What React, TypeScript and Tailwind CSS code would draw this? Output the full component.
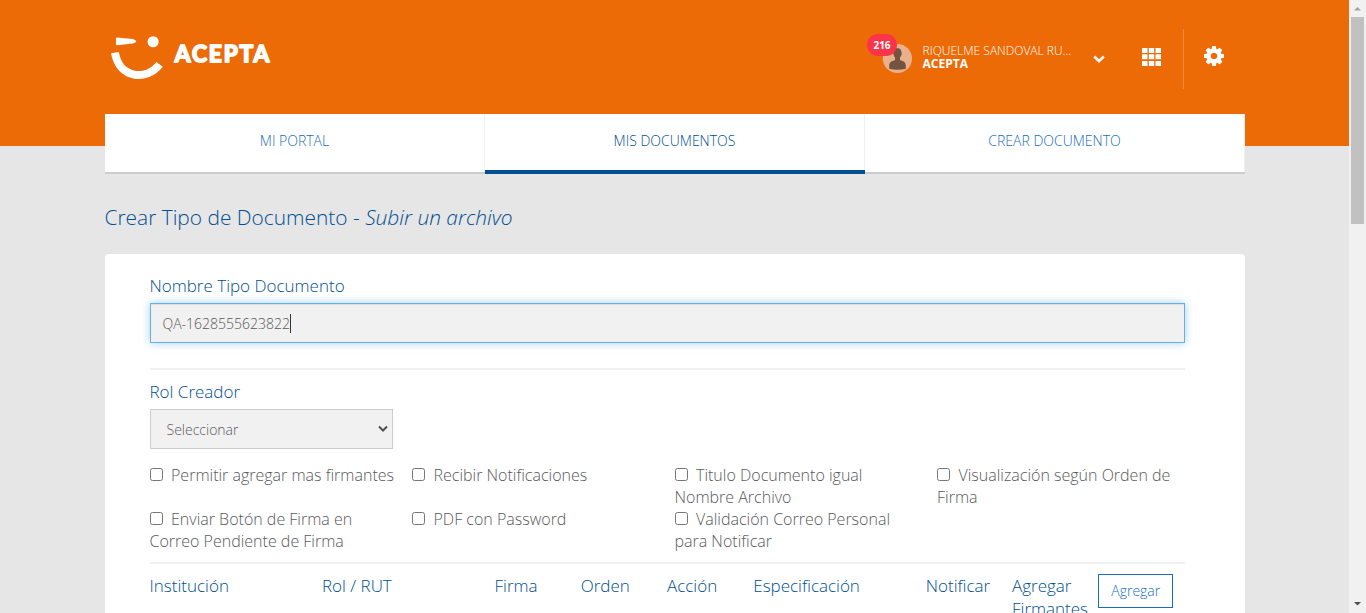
import React from "react";

const tabs = [
  { label: "MI PORTAL", active: false },
  { label: "MIS DOCUMENTOS", active: true },
  { label: "CREAR DOCUMENTO", active: false },
];

const options = [
  "Permitir agregar mas firmantes",
  "Recibir Notificaciones",
  "Titulo Documento igual Nombre Archivo",
  "Visualización según Orden de Firma",
  "Enviar Botón de Firma en Correo Pendiente de Firma",
  "PDF con Password",
  "Validación Correo Personal para Notificar",
];

function Logo() {
  return (
    <div className="flex h-[44px] w-[165px] items-start">
      <svg width="54" height="44" viewBox="0 0 54 44" fill="none">
        <path d="M6 1.300 L22 2.900 Q29 5.200 22 7.500 L6 9.100 Q5 9 5 8 V2.400 Q5 1.300 6 1.300 Z" fill="#fff" />
        <circle cx="42.400" cy="5.700" r="5.600" fill="#fff" />
        <path d="M4 16.700 C8 42.500 36 45.500 48.900 28.500" stroke="#fff" strokeWidth="8" strokeLinejoin="round" />
      </svg>
      <svg width="104" height="36" viewBox="0 0 104 36" className="ml-2">
        <text x="1.800" y="26.500" fill="#fff" stroke="#fff" strokeWidth="1.800" strokeLinejoin="round" fontFamily="Lato, sans-serif" fontWeight="700" fontSize="22.800" textLength="95" lengthAdjust="spacing">ACEPTA</text>
      </svg>
    </div>
  );
}

function User() {
  return (
    <div className="relative flex h-[60px] w-[224px] pt-[15px]">
      <svg width="30" height="30" viewBox="0 0 30 30" className="ml-[15px]">
        <circle cx="15.400" cy="14.500" r="14.600" fill="#e9b18b" />
        <ellipse cx="15.500" cy="9.300" rx="4.200" ry="5.300" fill="#745440" />
        <path d="M13 12h5v4.200c4 .8 5.500 2 5.800 5.200v3.400q-8.300 2-16.600 0v-3.400c.3-3.200 1.800-4.400 5.800-5.200z" fill="#745440" />
      </svg>
      <span className="absolute left-0 top-[5px] flex h-[22px] w-[30px] items-center justify-center rounded-full bg-[#fb3449] text-[10px] font-bold">216</span>
      <div className="ml-[10.5px] text-[12px] leading-[13px]">
        <div className="w-[152px] whitespace-nowrap">RIQUELME SANDOVAL RU...</div>
        <div className="font-bold">ACEPTA</div>
      </div>
    </div>
  );
}

function Scrollbar() {
  return (
    <div className="flex w-[17px] shrink-0 flex-col items-center justify-between bg-[#f1f1f1]">
      <div className="flex flex-col items-center">
        <svg width="17" height="17" viewBox="0 0 17 17"><path d="M5 10.500h7L8.500 7z" fill="#a3a3a3" /></svg>
        <div className="h-[207px] w-[13px] bg-[#c1c1c1]" />
      </div>
      <svg width="17" height="17" viewBox="0 0 17 17"><path d="M5 6h7L8.500 9.500z" fill="#505050" /></svg>
    </div>
  );
}

export default function App() {
  return (
    <div className="flex h-[613px] w-[1366px] overflow-hidden bg-[#e6e6e6] font-['Open_Sans',sans-serif] font-light text-[#58595b]">
      <div className="h-full min-w-0 flex-1 overflow-hidden">
        <header className="h-[146px] bg-[#ed6b06] pt-[29px] text-white">
          <div className="flex w-[1245px] pl-[111px]">
            <div className="pt-[7px]"><Logo /></div>
            <div className="ml-[591px]"><User /></div>
            <svg width="12" height="9" viewBox="0 0 12 9" className="mt-[26px] ml-[2px]" fill="none">
              <path d="M1.200 1.600 6 6.100l4.800-4.500" stroke="#f2f2f2" strokeWidth="2.800" />
            </svg>
            <svg width="19" height="18" viewBox="0 0 19 18" className="mt-[19px] ml-[37px]" fill="#fff">
              <path d="M0 0h5.500v5H0zM6.800 0h5.400v5H6.800zM13.500 0H19v5h-5.500zM0 6.300h5.500v5H0zM6.800 6.300h5.400v5H6.800zM13.500 6.300H19v5h-5.500zM0 13h5.500v5H0zM6.800 13h5.400v5H6.800zM13.500 13H19v5h-5.500z" />
            </svg>
            <div className="ml-[22px] h-[60px] w-px bg-[#f2883a]" />
            <svg width="20" height="20" viewBox="0 0 1536 1536" className="mt-[17px] ml-[19.5px]" fill="#fff">
              <path d="M1024 768q0-106-75-181t-181-75-181 75-75 181 75 181 181 75 181-75 75-181zm512-109v222q0 12-8 23t-20 13l-185 28q-19 54-39 91 35 50 107 138 10 12 10 25t-9 23q-27 37-99 108t-94 71q-12 0-26-9l-138-108q-44 23-91 38-16 136-29 186-7 28-36 28H657q-14 0-24.500-8.500T621 1506l-28-184q-49-16-90-37l-141 107q-10 9-25 9-14 0-25-11-126-114-165-168-7-10-7-23 0-12 8-23 15-21 51-66.500t54-70.500q-27-50-41-99L29 913q-13-2-21-12.500T0 877V655q0-12 8-23t19-13l186-28q14-46 39-92-40-57-107-138-10-12-10-24 0-10 9-23 26-36 98.500-107.500T337 135q13 0 26 10l138 107q44-23 91-38 16-136 29-186 7-28 36-28h222q14 0 24.500 8.500T915 30l28 184q49 16 90 37l142-107q9-9 24-9 13 0 25 10 129 119 165 170 7 8 7 22 0 12-8 23-15 21-51 66.500t-54 70.500q26 50 41 98l183 28q13 2 21 12.500t8 23.500z" />
            </svg>
          </div>
        </header>

        <main className="relative mx-auto -mt-8 w-[1140px]">
          <nav className="grid h-[60px] grid-cols-3 text-center text-[14px]">
            {tabs.map((tab) => (
              <a
                key={tab.label}
                className={
                  tab.active
                    ? "border-b-4 border-b-[#004f91] bg-white pt-[17px] leading-5 text-[#004f91] shadow-[inset_-1px_0_0_#f0f0f0]"
                    : "border-b-2 border-b-[#cccccc] bg-white pt-[17px] leading-5 text-[#1a6dbd] shadow-[inset_-1px_0_0_#f0f0f0]"
                }
              >
                {tab.label}
              </a>
            ))}
          </nav>

          <h1 className="mt-[28px] h-[52px] text-[20.9px] leading-[30px] text-[#004f91]">
            Crear Tipo de Documento - <em>Subir un archivo</em>
          </h1>

          <section className="h-[400px] rounded-t bg-white px-[45px] pt-[21px]">
            <label className="block h-[28px] text-[17px] leading-[22px] text-[#004f91]">Nombre Tipo Documento</label>
            <div className="flex h-[40px] w-[1035px] items-center border border-[#66afe9] bg-[#f1f1f1] pl-3 text-[14px] shadow-[inset_0_1px_1px_rgba(0,0,0,0.075),0_0_8px_rgba(102,175,233,0.6)]">
              <span>QA-1628555623822</span>
              <span className="-ml-[0.5px] h-[19px] w-px bg-[#333333]" />
            </div>
            <div className="mt-[25px] h-[2px] w-[1035px] bg-[#f1f1f1]" />
            <label className="mt-[11px] block h-[28px] text-[17px] leading-[22px] text-[#004f91]">Rol Creador</label>
            <div className="flex h-[40px] w-[243px] items-center justify-between border border-[#cccccc] bg-[#f1f1f1] pr-1 pl-4 text-[14px]">
              <span>Seleccionar</span>
              <svg width="10" height="8" viewBox="0 0 10 8" fill="none"><path d="M1 1.500 5 5.500 9 1.500" stroke="#505050" strokeWidth="2" /></svg>
            </div>

            <div className="mt-[15px] grid w-[1050px] grid-cols-4 text-[16px] leading-[22px]">
              {options.map((option) => (
                <label key={option} className="block h-[44px] pr-[14px]">
                  <input type="checkbox" className="mr-[8.5px] h-[13px] w-[13px] align-[0px]" />
                  {option}
                </label>
              ))}
            </div>

            <div className="mt-[10px] h-[2px] w-[1035px] bg-[#f1f1f1]" />
            <div className="grid w-[1035px] grid-cols-12 pt-[10px] text-[17px] leading-[23px] text-[#004f91]">
              <div className="col-span-2">Institución</div>
              <div className="col-span-2">Rol / RUT</div>
              <div>Firma</div>
              <div>Orden</div>
              <div>Acción</div>
              <div className="col-span-2">Especificación</div>
              <div>Notificar</div>
              <div>Agregar Firmantes</div>
              <div>
                <button className="block h-[34px] w-[75px] border border-[#1a6dbd] pb-[2px] text-[14px] text-[#1a6dbd]">Agregar</button>
              </div>
            </div>
          </section>
        </main>
      </div>
      <Scrollbar />
    </div>
  );
}
